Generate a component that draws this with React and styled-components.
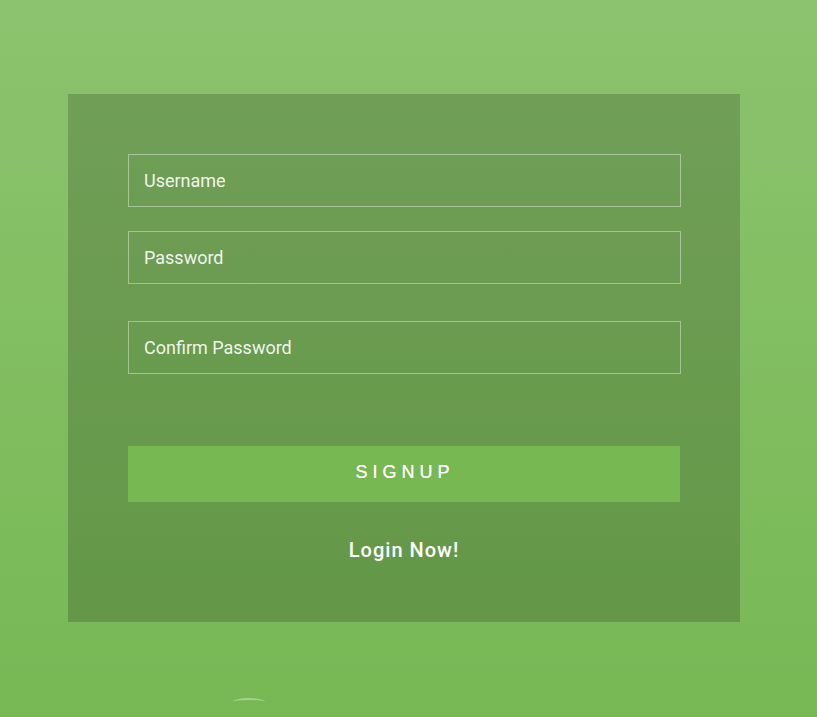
import React from 'react'
import styled, { createGlobalStyle } from 'styled-components'

const GlobalStyle = createGlobalStyle`
  html, body {
    margin: 0;
    padding: 0;
  }
  body {
    font-family: Roboto, "Liberation Sans", sans-serif;
    background: linear-gradient(to bottom, #8cc36e 0%, #77b854 100%);
    min-height: 717px;
  }
`

const Page = styled.div`
  position: relative;
  min-height: 717px;
  padding: 94px 0 0 68px;
  box-sizing: border-box;
  overflow: hidden;
`

const Card = styled.form`
  width: 672px;
  height: 528px;
  box-sizing: border-box;
  padding: 60px 60px 0 60px;
  background: rgba(0, 0, 0, 0.18);
  display: flex;
  flex-direction: column;
`

const Field = styled.input`
  width: 553px;
  height: 53px;
  box-sizing: border-box;
  margin: 0 0 ${p => p.gap}px 0;
  padding: 0 15px;
  background: transparent;
  border: 1px solid rgba(255, 255, 255, 0.4);
  outline: none;
  color: #fff;
  font-family: Roboto, "Liberation Sans", sans-serif;
  font-size: 18px;

  &::placeholder {
    color: rgba(255, 255, 255, 0.92);
  }
`

const Button = styled.button`
  width: 552px;
  height: 56px;
  border: none;
  background: #77b852;
  color: #fff;
  font-family: "Liberation Sans", Arial, sans-serif;
  font-size: 18px;
  letter-spacing: 5px;
  padding: 0 0 3px 2px;
  text-shadow: 0 0 0.4px #fff;
  cursor: pointer;
`

const LoginLink = styled.a`
  margin-top: 36px;
  align-self: center;
  color: #fff;
  font-family: Roboto, "Liberation Sans", sans-serif;
  font-size: 20px;
  font-weight: 500;
  letter-spacing: 1px;
  text-decoration: none;
  cursor: pointer;
`

const Bubble = styled.span`
  position: absolute;
  left: 233px;
  top: 698px;
  width: 32px;
  height: 8px;
  border-radius: 50%;
  border-top: 2px solid rgba(255, 255, 255, 0.35);
  box-sizing: border-box;
`

export default function App() {
  return (
    <>
      <GlobalStyle />
      <Page>
        <Card onSubmit={e => e.preventDefault()}>
          <Field type="text" placeholder="Username" gap={24} />
          <Field type="password" placeholder="Password" gap={37} />
          <Field type="password" placeholder="Confirm Password" gap={72} />
          <Button type="submit">SIGNUP</Button>
          <LoginLink>Login Now!</LoginLink>
        </Card>
        <Bubble />
      </Page>
    </>
  )
}
